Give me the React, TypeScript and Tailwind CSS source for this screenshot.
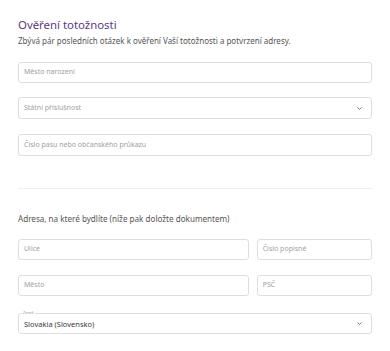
import React from "react";

function Field({ placeholder, className = "" }: { placeholder: string; className?: string }) {
  return (
    <div
      className={`h-[21px] flex items-center rounded-[3px] border border-[#dedede] bg-white px-[5px] text-[7px] text-[#a0a0a0] ${className}`}
    >
      {placeholder}
    </div>
  );
}

function Chevron() {
  return (
    <svg width="5" height="3" viewBox="0 0 5 3" className="text-[#666]">
      <path d="M0.6 0.6 L2.5 2.4 L4.4 0.6" fill="none" stroke="currentColor" strokeWidth="0.9" />
    </svg>
  );
}

export default function App() {
  return (
    <div
      className="w-[390px] h-[351px] bg-white px-[18px] pt-[17px] overflow-hidden"
      style={{ fontFamily: "'Noto Sans', sans-serif" }}
    >
      <h1 className="text-[11.4px] leading-[16px] text-[#5a3a7e] font-normal">Ověření totožnosti</h1>
      <p className="mt-[3px] text-[8px] leading-[10px] text-[#555]">
        Zbývá pár posledních otázek k ověření Vaší totožnosti a potvrzení adresy.
      </p>

      <div className="mt-[16px] flex flex-col">
        <Field placeholder="Město narození" />
        <div className="mt-[14px] h-[22px] flex items-center justify-between rounded-[3px] border border-[#dedede] bg-white pl-[5px] pr-[9px] text-[7px] text-[#a0a0a0]">
          <span>Státní příslušnost</span>
          <Chevron />
        </div>
        <Field placeholder="Číslo pasu nebo občanského průkazu" className="mt-[15px] h-[22px]" />
      </div>

      <div className="mt-[32px] border-t border-[#efefef]" />

      <p className="mt-[25px] text-[8.1px] leading-[10px] text-[#555]">
        Adresa, na které bydlíte (níže pak doložte dokumentem)
      </p>

      <div className="mt-[15px] grid grid-cols-[2fr_1fr] gap-x-[8px] gap-y-[15px]">
        <Field placeholder="Ulice" />
        <Field placeholder="Číslo popisné" />
        <Field placeholder="Město" />
        <Field placeholder="PSČ" />
      </div>

      <div className="relative mt-[17px] h-[21px] flex items-center justify-between rounded-[3px] border border-[#dedede] bg-white pl-[5px] pr-[9px] text-[7.5px] text-[#3a3a3a]">
        <span className="absolute left-[3px] top-[-4px] bg-white px-[1px] text-[4px] leading-[6px] text-[#999]">
          Země
        </span>
        <span className="pt-[2px]">Slovakia (Slovensko)</span>
        <Chevron />
      </div>
    </div>
  );
}
